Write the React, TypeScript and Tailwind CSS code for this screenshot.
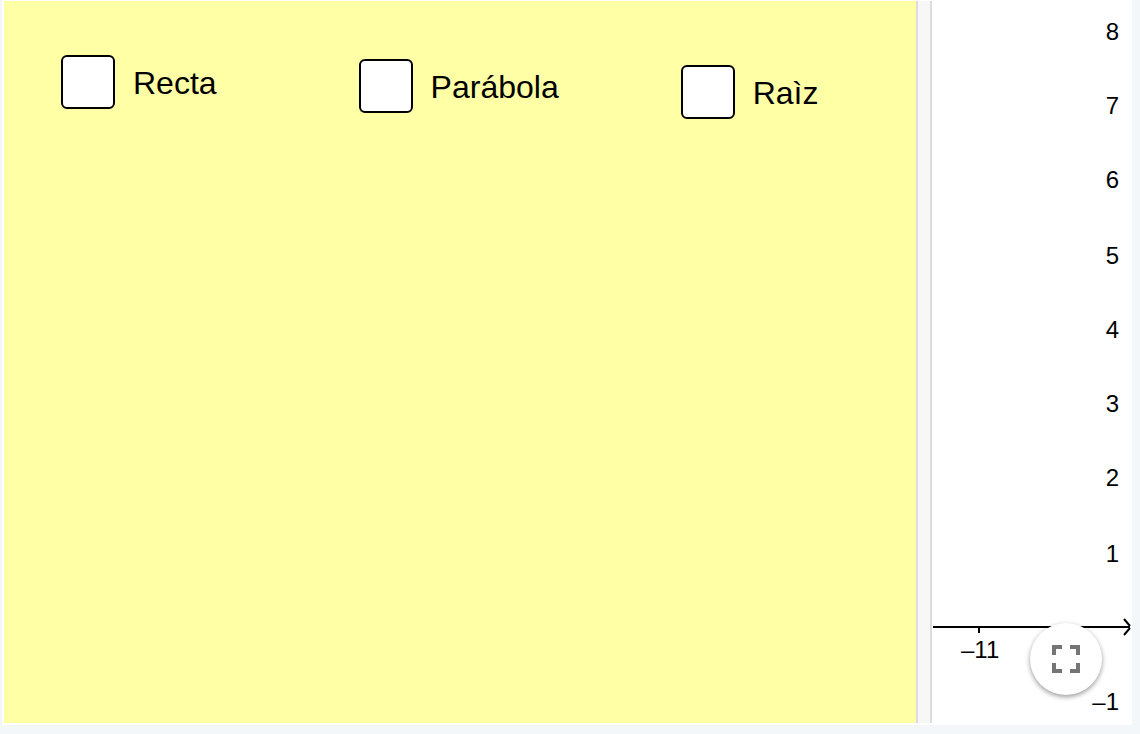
import { useState } from 'react';

type CurveOption = {
  id: string;
  label: string;
  className: string;
};

const curves: CurveOption[] = [
  { id: 'recta', label: 'Recta', className: 'mt-[54px]' },
  { id: 'parabola', label: 'Parábola', className: 'mt-[58px] ml-[142px]' },
  { id: 'raiz', label: 'Raìz', className: 'mt-16 ml-[122px]' },
];

// baseline of every label on the y axis
const yLabels = [
  { text: '8', y: 40 },
  { text: '7', y: 114 },
  { text: '6', y: 188 },
  { text: '5', y: 264 },
  { text: '4', y: 338 },
  { text: '3', y: 412 },
  { text: '2', y: 486 },
  { text: '1', y: 562 },
  { text: '–1', y: 710 },
];

function CurveCheckbox({
  curve,
  checked,
  onChange,
}: {
  curve: CurveOption;
  checked: boolean;
  onChange: () => void;
}) {
  return (
    <div className={`flex items-center ${curve.className}`}>
      <input
        id={curve.id}
        type="checkbox"
        checked={checked}
        onChange={onChange}
        className="size-[54px] shrink-0 appearance-none rounded-md border-2 border-black bg-white checked:bg-gray-700"
      />
      <label htmlFor={curve.id} className="pt-0.5 pl-[18px] text-[32px] leading-10 whitespace-nowrap">
        {curve.label}
      </label>
    </div>
  );
}

function Graph() {
  return (
    <svg className="block h-full w-[200px]" role="img" aria-label="Graphics view">
      {/* x axis */}
      <path d="M1 627H198M47 628V633" stroke="#000" strokeWidth="2" fill="none" />
      <path d="M192 619L198 626M198 628L192 635" stroke="#000" strokeWidth="2" fill="none" />
      <text x="29" y="658" fontSize="24">
        –11
      </text>

      {yLabels.map((label) => (
        <text key={label.text} x="187" y={label.y} fontSize="24" textAnchor="end">
          {label.text}
        </text>
      ))}
    </svg>
  );
}

export default function App() {
  const [visible, setVisible] = useState<string[]>([]);

  const toggle = (id: string) => {
    setVisible((prev) =>
      prev.includes(id) ? prev.filter((v) => v !== id) : [...prev, id]
    );
  };

  return (
    <div className="h-screen bg-[#f4f7f9] pr-2 pb-[9px] pl-0.5 font-['Liberation_Sans',Arial,sans-serif] text-black">
      <main className="flex h-full bg-white pl-0.5">
        {/* Controls */}
        <section className="mt-px mb-0.5 flex min-w-0 flex-1 items-start bg-[#ffffa5] pl-[57px]">
          {curves.map((curve) => (
            <CurveCheckbox
              key={curve.id}
              curve={curve}
              checked={visible.includes(curve.id)}
              onChange={() => toggle(curve.id)}
            />
          ))}
        </section>

        {/* Splitter */}
        <div className="mt-px mb-0.5 w-4 shrink-0 border-x-2 border-[#dcdcdc] bg-[#f7f7f7]" />

        <section className="relative shrink-0">
          <Graph />
          <button
            type="button"
            aria-label="Fullscreen"
            className="absolute right-[30px] bottom-[30px] flex size-[72px] items-center justify-center rounded-full bg-white shadow-[0_2px_5px_rgba(0,0,0,0.4)]"
          >
            <svg viewBox="0 0 24 24" className="size-12" fill="#757575">
              <path d="M7 14H5v5h5v-2H7v-3zm-2-4h2V7h3V5H5v5zm12 7h-3v2h5v-5h-2v3zM14 5v2h3v3h2V5h-5z" />
            </svg>
          </button>
        </section>
      </main>
    </div>
  );
}
